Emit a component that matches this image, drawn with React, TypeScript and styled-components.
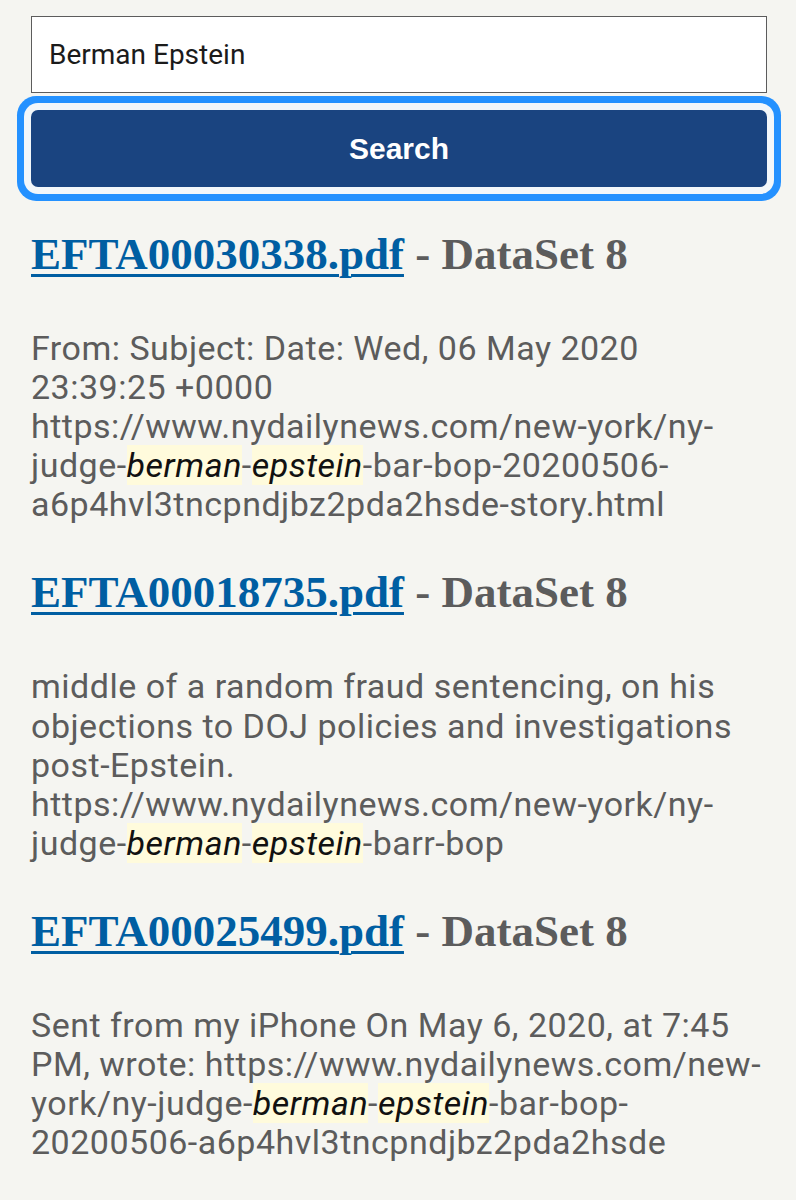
import styled, { createGlobalStyle } from "styled-components";

const GlobalStyle = createGlobalStyle`
    body {
        margin: 0;
        background: #f5f5f1;
    }
`;

interface Result {
    file: string;
    dataset: string;
    snippet: (string | { hit: string })[];
}

const results: Result[] = [
    {
        file: "EFTA00030338.pdf",
        dataset: "DataSet 8",
        snippet: [
            "From: Subject: Date: Wed, 06 May 2020 23:39:25 +0000 https://www.nydailynews.com/new-york/ny-judge-",
            { hit: "berman" },
            "-",
            { hit: "epstein" },
            "-bar-bop-20200506-a6p4hvl3tncpndjbz2pda2hsde-story.html",
        ],
    },
    {
        file: "EFTA00018735.pdf",
        dataset: "DataSet 8",
        snippet: [
            "middle of a random fraud sentencing, on his objections to DOJ policies and investigations post-Epstein. https://www.nydailynews.com/new-york/ny-judge-",
            { hit: "berman" },
            "-",
            { hit: "epstein" },
            "-barr-bop",
        ],
    },
    {
        file: "EFTA00025499.pdf",
        dataset: "DataSet 8",
        snippet: [
            "Sent from my iPhone On May 6, 2020, at 7:45 PM, wrote: https://www.nydailynews.com/new-york/ny-judge-",
            { hit: "berman" },
            "-",
            { hit: "epstein" },
            "-bar-bop-20200506-a6p4hvl3tncpndjbz2pda2hsde",
        ],
    },
];

export default function App() {
    return (
        <Page>
            <GlobalStyle />
            <SearchInput defaultValue="Berman Epstein" />
            <SearchButton>Search</SearchButton>
            {results.map((r) => (
                <ResultItem key={r.file}>
                    <ResultTitle>
                        <FileLink href="#">{r.file}</FileLink> - {r.dataset}
                    </ResultTitle>
                    <Snippet>
                        {r.snippet.map((part, i) =>
                            typeof part === "string" ? (
                                part
                            ) : (
                                <Hit key={i}>{part.hit}</Hit>
                            )
                        )}
                    </Snippet>
                </ResultItem>
            ))}
        </Page>
    );
}

const Page = styled.div`
    padding: 16px 29px 40px 31px;
    display: flex;
    flex-direction: column;
`;

const SearchInput = styled.input`
    box-sizing: border-box;
    width: 100%;
    height: 77px;
    margin: 0;
    padding: 0 17px;
    border: 1.5px solid #5c5c5c;
    border-radius: 0;
    background: #fff;
    font-family: Roboto, "Liberation Sans", sans-serif;
    font-size: 28px;
    color: #1b1b1b;
    outline: none;
`;

const SearchButton = styled.button`
    box-sizing: border-box;
    width: 100%;
    height: 77px;
    margin-top: 17px;
    border: none;
    border-radius: 7px;
    background: #1a4480;
    color: #fff;
    font-family: "Liberation Sans", Arial, sans-serif;
    font-weight: bold;
    font-size: 30px;
    box-shadow: 0 0 0 7px #f3f7fa, 0 0 0 14px #2491ff;
    cursor: pointer;
`;

const ResultItem = styled.div`
    display: flex;
    flex-direction: column;

    &:first-of-type h2 {
        margin-top: 40px;
    }
`;

const ResultTitle = styled.h2`
    margin: 41px 0 0;
    font-family: "Liberation Serif", "Times New Roman", serif;
    font-weight: bold;
    font-size: 45px;
    line-height: 55px;
    color: #5c5c5c;
`;

const FileLink = styled.a`
    color: #005ea2;
    text-decoration: underline;
    text-decoration-thickness: 3px;
    text-underline-offset: 5px;
`;

const Snippet = styled.p`
    margin: 47px 0 0;
    font-family: Roboto, "Liberation Sans", sans-serif;
    font-size: 34px;
    letter-spacing: 0.5px;
    line-height: 39.1px;
    color: #5c5c5c;
`;

const Hit = styled.mark`
    background: #fffbdc;
    color: #111;
    font-style: italic;
`;
